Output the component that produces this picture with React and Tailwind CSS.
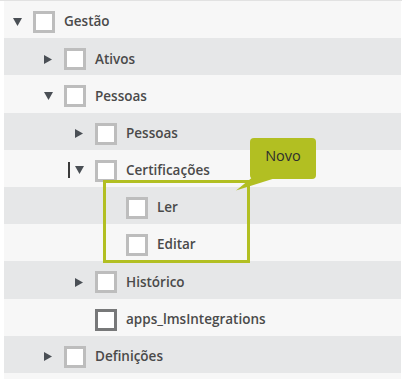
import React from 'react';

const rows = [
  { label: 'Gestão', level: 0, toggle: 'down' },
  { label: 'Ativos', level: 1, toggle: 'right' },
  { label: 'Pessoas', level: 1, toggle: 'down' },
  { label: 'Pessoas', level: 2, toggle: 'right' },
  { label: 'Certificações', level: 2, toggle: 'down', cursor: true },
  { label: 'Ler', level: 3 },
  { label: 'Editar', level: 3 },
  { label: 'Histórico', level: 2, toggle: 'right' },
  { label: 'apps_lmsIntegrations', level: 2, dark: true },
  { label: 'Definições', level: 1, toggle: 'right' },
  { label: '', level: 1 },
];

const indents = ['pl-[9px]', 'pl-[40px]', 'pl-[71px]', 'pl-[102px]'];

function Caret({ dir }) {
  if (dir === 'down') {
    return (
      <svg width="9" height="8" viewBox="0 0 9 8" className="mt-[-1px]">
        <path d="M0 0 L9 0 L4.5 8 Z" fill="#4a4f55" />
      </svg>
    );
  }
  return (
    <svg width="8" height="9" viewBox="0 0 8 9">
      <path d="M0 0 L8 4.5 L0 9 Z" fill="#4a4f55" />
    </svg>
  );
}

function TreeRow({ row, index }) {
  const bg = index % 2 === 0 ? 'bg-[#f7f7f7]' : 'bg-[#e6e7e8]';
  return (
    <div className={`relative flex items-center h-[37.2px] pt-[5px] ${bg} ${indents[row.level]}`}>
      {row.cursor && <span className="absolute left-[64px] top-[12px] w-[1.5px] h-[16px] bg-[#3a3a3a]" />}
      {row.label !== '' && (
        <>
          <div className="w-[20px] flex items-center">
            {row.toggle && <Caret dir={row.toggle} />}
          </div>
          <div
            className={`w-[22px] h-[22px] bg-white border-[3px] ${row.dark ? 'border-[#777879]' : 'border-[#bdbdbd]'}`}
          />
          <span className="ml-[9px] text-[13.5px] font-semibold text-[#4a4a4a] leading-none">{row.label}</span>
        </>
      )}
    </div>
  );
}

export default function App() {
  return (
    <div
      className="relative w-[402px] h-[379px] overflow-hidden bg-white"
      style={{ fontFamily: '"Open Sans", "Liberation Sans", sans-serif' }}
    >
      <div className="h-[1px] bg-[#e2e2e2]" />
      <div className="pl-[4px] pr-[1px]">
        {rows.map((row, i) => (
          <TreeRow key={i} row={row} index={i} />
        ))}
      </div>

      {/* highlight box */}
      <div className="absolute left-[103px] top-[180px] w-[147px] h-[83px] border-[3px] border-[#b2bf22]" />

      {/* tooltip */}
      <svg className="absolute left-[230px] top-[170px]" width="60" height="24" viewBox="0 0 60 24">
        <path d="M6 20.5 L24 6 L52 6 Z" fill="#b2bf22" />
      </svg>
      <div className="absolute left-[250px] top-[138px] w-[66px] h-[41px] rounded-[4px] bg-[#b2bf22] flex items-center justify-center">
        <span className="text-[14.5px] text-[#2e2e2e] leading-none mt-[-4px]">Novo</span>
      </div>
    </div>
  );
}
